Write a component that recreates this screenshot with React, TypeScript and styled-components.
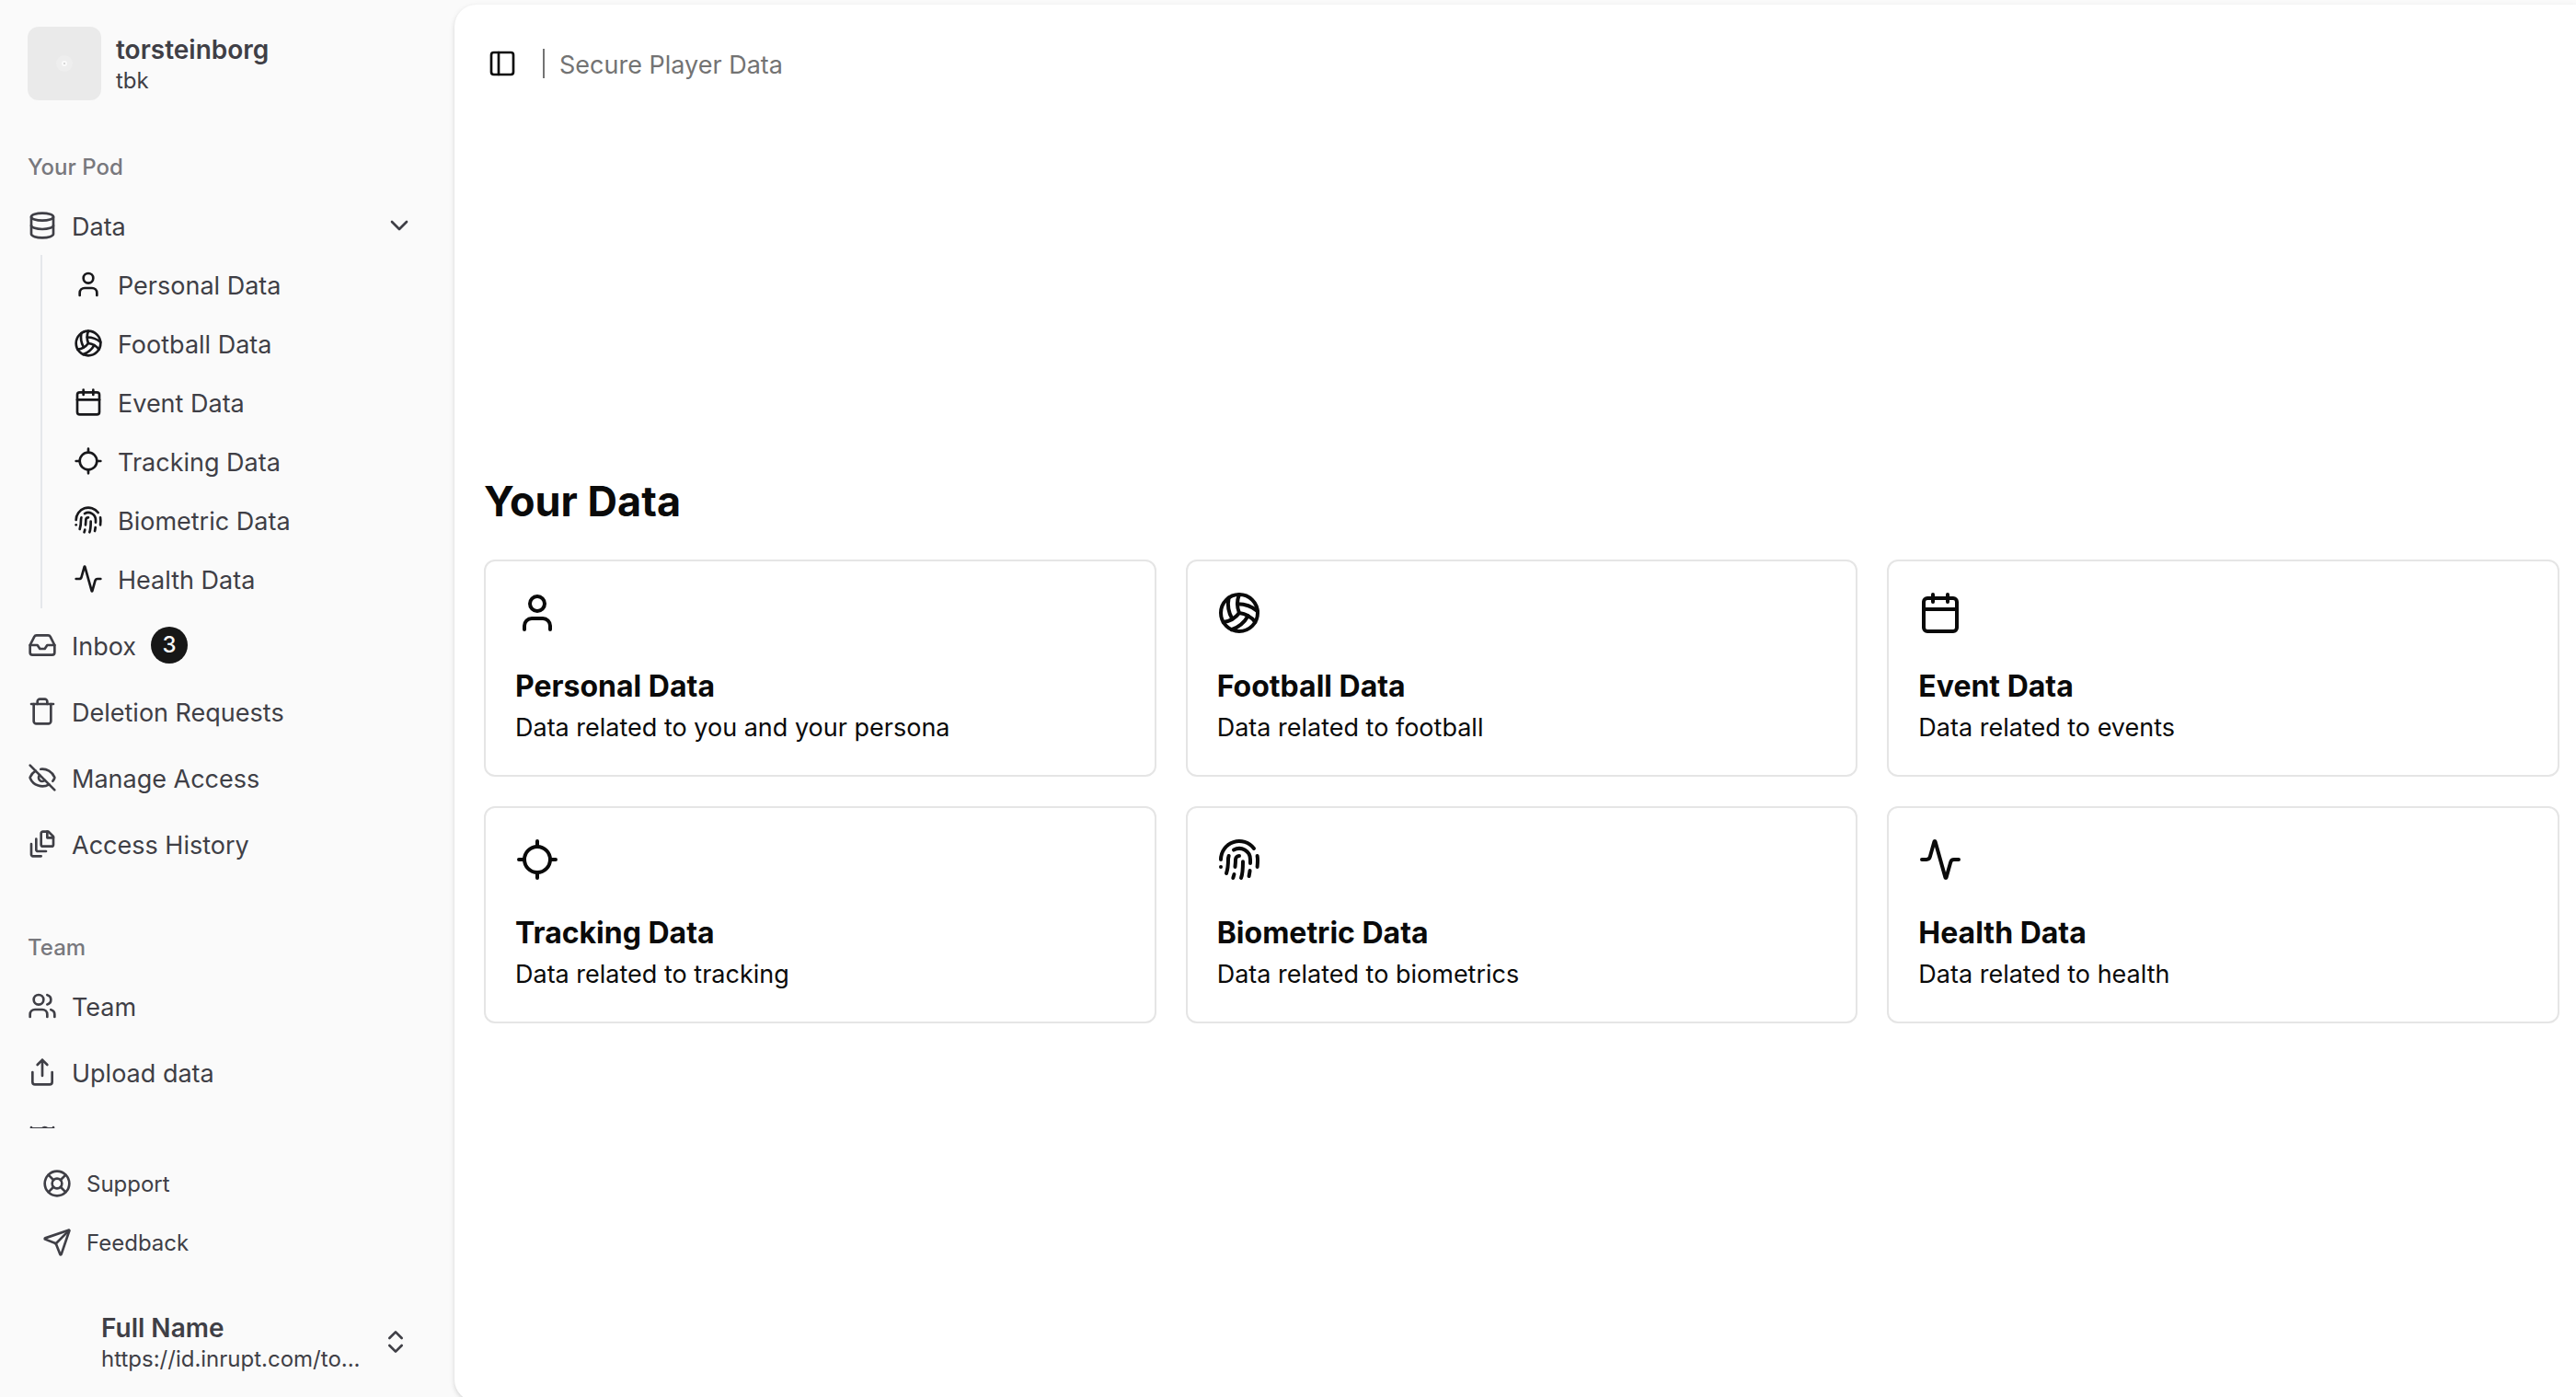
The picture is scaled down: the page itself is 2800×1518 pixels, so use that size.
import React from "react";
import styled, { createGlobalStyle } from "styled-components";
import {
  Activity,
  Calendar,
  ChevronDown,
  ChevronsUpDown,
  Crosshair,
  Database,
  EyeOff,
  Fingerprint,
  Inbox,
  LifeBuoy,
  LucideIcon,
  PanelLeft,
  Send,
  User,
  Users,
  Volleyball,
} from "lucide-react";

const colors = {
  sidebar: "#fafafa",
  sidebarText: "#3f3f46",
  sidebarLabel: "#78787d",
  rail: "#e5e7eb",
  ink: "#0a0a0a",
  subIcon: "#18181b",
  muted: "#737373",
  border: "#e5e5e5",
};

const GlobalStyle = createGlobalStyle`
  *, *::before, *::after { box-sizing: border-box; }
  body {
    margin: 0;
    background: ${colors.sidebar};
    color: ${colors.ink};
    font-family: Inter, "Liberation Sans", sans-serif;
    font-size: 27px;
    line-height: 40px;
    -webkit-font-smoothing: antialiased;
  }
  h1, h2, p, ul { margin: 0; padding: 0; }
  ul { list-style: none; }
  a { color: inherit; text-decoration: none; }
  button {
    border: 0;
    padding: 0;
    background: none;
    color: inherit;
    font: inherit;
    text-align: left;
    cursor: pointer;
  }
  svg { flex-shrink: 0; }
`;

const Shell = styled.div`
  display: flex;
  height: 100vh;
  overflow: hidden;
`;

const Sidebar = styled.aside`
  display: flex;
  flex-direction: column;
  flex: 0 0 494px;
  min-width: 0;
  padding: 13px 28px 12px 14px;
  color: ${colors.sidebarText};
`;

const AccountButton = styled.button<{ $compact?: boolean }>`
  display: flex;
  align-items: center;
  gap: 16px;
  width: 100%;
  height: ${(p) => (p.$compact ? 96 : 112)}px;
  padding: ${(p) => (p.$compact ? "0 20px 0 16px" : "0 16px")};
`;

const Avatar = styled.span`
  display: grid;
  place-items: center;
  width: 80px;
  height: 80px;
  border-radius: 12px;
  background: #eaeaea;
`;

const AvatarSlot = styled.span`
  flex: 0 0 64px;
  height: 64px;
`;

const AccountText = styled.span`
  display: flex;
  flex-direction: column;
  flex: 1;
  min-width: 0;
  padding-top: 2px;
`;

const AccountName = styled.span`
  font-size: 28px;
  font-weight: 600;
  line-height: 35px;
`;

const AccountDetail = styled.span`
  font-size: 24px;
  line-height: 32px;
  white-space: nowrap;
`;

const NavScroll = styled.div`
  display: flex;
  flex-direction: column;
  flex: 1;
  gap: 48px;
  min-height: 0;
  padding-top: 24px;
  overflow: hidden;
`;

const GroupLabel = styled.h2`
  display: flex;
  align-items: center;
  height: 64px;
  padding: 2px 16px 0;
  color: ${colors.sidebarLabel};
  font-size: 24px;
  font-weight: 500;
`;

const MenuList = styled.ul`
  display: flex;
  flex-direction: column;
  gap: 8px;
`;

const MenuLink = styled.a<{ $small?: boolean }>`
  display: flex;
  align-items: center;
  gap: 16px;
  height: ${(p) => (p.$small ? 56 : 64)}px;
  padding: 0 16px;
  font-size: ${(p) => (p.$small ? 24 : 27)}px;
`;

const MenuToggle = styled(MenuLink).attrs({ as: "button" })`
  width: 100%;
`;

const Label = styled.span<{ $grow?: boolean; $small?: boolean }>`
  flex: ${(p) => (p.$grow ? "1" : "none")};
  padding-top: ${(p) => (p.$small ? 2 : 4)}px;
`;

const SubList = styled(MenuList)`
  margin-left: 30px;
  padding: 4px 0 4px 18px;
  border-left: 2px solid ${colors.rail};
`;

const SubLink = styled.a`
  display: flex;
  align-items: center;
  gap: 16px;
  height: 56px;
  padding: 0 16px;

  svg { color: ${colors.subIcon}; }
`;

const Badge = styled.span`
  display: grid;
  place-items: center;
  width: 40px;
  height: 40px;
  border-radius: 50%;
  background: #171717;
  color: #fafafa;
  font-size: 24px;
  font-weight: 500;
`;

const SecondaryNav = styled.nav`
  padding: 32px 16px;
`;

const Panel = styled.main`
  display: flex;
  flex-direction: column;
  flex: 1;
  min-width: 0;
  margin: 5px 0 -5px;
  border-radius: 24px 0 0 24px;
  background: #ffffff;
  box-shadow: 0 2px 6px rgba(0, 0, 0, 0.1), 0 2px 4px rgba(0, 0, 0, 0.06);
`;

const TopBar = styled.header`
  display: flex;
  align-items: center;
  gap: 16px;
  height: 128px;
  padding: 0 24px;
  color: ${colors.muted};
`;

const PanelToggle = styled.button`
  display: grid;
  place-items: center;
  width: 56px;
  height: 56px;
  color: ${colors.ink};
`;

const Divider = styled.span`
  width: 2px;
  height: 32px;
  background: ${colors.muted};
`;

const Content = styled.section`
  display: flex;
  flex-direction: column;
  justify-content: center;
  flex: 1;
  gap: 30px;
  padding: 0 18px 32px 32px;
`;

const Title = styled.h1`
  font-size: 45px;
  font-weight: 700;
  line-height: 66px;
`;

const CardGrid = styled.div`
  display: grid;
  grid-template-columns: repeat(3, 1fr);
  gap: 32px;
`;

const Card = styled.a`
  display: flex;
  flex-direction: column;
  padding: 32px 32px 30px;
  border: 2px solid ${colors.border};
  border-radius: 12px;
`;

const CardTitle = styled.h2`
  margin-top: 32px;
  font-size: 32px;
  font-weight: 700;
  line-height: 48px;
`;

const CardText = styled.p`
  line-height: 42px;
`;

type DataKind = { label: string; text: string; icon: LucideIcon };

const dataKinds: DataKind[] = [
  { label: "Personal Data", text: "Data related to you and your persona", icon: User },
  { label: "Football Data", text: "Data related to football", icon: Volleyball },
  { label: "Event Data", text: "Data related to events", icon: Calendar },
  { label: "Tracking Data", text: "Data related to tracking", icon: Crosshair },
  { label: "Biometric Data", text: "Data related to biometrics", icon: Fingerprint },
  { label: "Health Data", text: "Data related to health", icon: Activity },
];

type IconProps = { size: number };

const Glyph = ({ size, children }: IconProps & { children: React.ReactNode }) => (
  <svg
    width={size}
    height={size}
    viewBox="0 0 24 24"
    fill="none"
    stroke="currentColor"
    strokeWidth="2"
    strokeLinecap="round"
    strokeLinejoin="round"
    aria-hidden="true"
  >
    {children}
  </svg>
);

const CrosshairOpen = ({ size }: IconProps) => (
  <Glyph size={size}>
    <path d="M2 12h3M19 12h3M12 2v3M12 19v3" />
    <circle cx="12" cy="12" r="7" />
  </Glyph>
);

const TrashIcon = ({ size }: IconProps) => (
  <Glyph size={size}>
    <path d="M3 6h18" />
    <path d="M19 6v14c0 1-1 2-2 2H7c-1 0-2-1-2-2V6" />
    <path d="M8 6V4c0-1 1-2 2-2h4c1 0 2 1 2 2v2" />
  </Glyph>
);

const UploadIcon = ({ size }: IconProps) => (
  <Glyph size={size}>
    <path d="M4 12v8a2 2 0 0 0 2 2h12a2 2 0 0 0 2-2v-8" />
    <path d="m16 6-4-4-4 4M12 2v13" />
  </Glyph>
);

const FileStackIcon = ({ size }: IconProps) => (
  <Glyph size={size}>
    <path d="M16 2v5h5" />
    <path d="M21 6v6.5c0 .8-.7 1.5-1.5 1.5h-7c-.8 0-1.5-.7-1.5-1.5v-9c0-.8.7-1.5 1.5-1.5H17l4 4z" />
    <path d="M7 8v8.8c0 .3.2.6.4.8.2.2.5.4.8.4H15" />
    <path d="M3 12v8.8c0 .3.2.6.4.8.2.2.5.4.8.4H11" />
  </Glyph>
);

const FrameIcon = ({ size }: IconProps) => (
  <Glyph size={size}>
    <path d="M3 3v18M21 3v18M3 4h18" />
    <circle cx="14" cy="6" r="3" />
  </Glyph>
);

const kindIcon = (kind: DataKind, size: number) => {
  if (kind.icon === Crosshair) return <CrosshairOpen size={size} />;
  const Icon = kind.icon;
  return <Icon size={size} />;
};

export default function App() {
  return (
    <>
      <GlobalStyle />
      <Shell>
        <Sidebar>
          <AccountButton type="button">
            <Avatar>
              <svg width="20" height="20" viewBox="0 0 20 20" aria-hidden="true">
                <circle cx="10" cy="10" r="9" fill="#eeeeee" />
                <circle cx="10" cy="10" r="3" fill="#fafafa" />
                <circle cx="10" cy="10" r="1" fill="#cccccc" />
              </svg>
            </Avatar>
            <AccountText>
              <AccountName>torsteinborg</AccountName>
              <AccountDetail>tbk</AccountDetail>
            </AccountText>
          </AccountButton>

          <NavScroll>
            <nav>
              <GroupLabel>Your Pod</GroupLabel>
              <MenuList>
                <li>
                  <MenuToggle type="button" aria-expanded="true">
                    <Database size={32} />
                    <Label $grow>Data</Label>
                    <ChevronDown size={32} />
                  </MenuToggle>
                  <SubList>
                    {dataKinds.map((kind) => (
                      <li key={kind.label}>
                        <SubLink href="#">
                          {kindIcon(kind, 32)}
                          <Label>{kind.label}</Label>
                        </SubLink>
                      </li>
                    ))}
                  </SubList>
                </li>
                <li>
                  <MenuLink href="#">
                    <Inbox size={32} />
                    <Label>Inbox</Label>
                    <Badge>3</Badge>
                  </MenuLink>
                </li>
                <li>
                  <MenuLink href="#">
                    <TrashIcon size={32} />
                    <Label>Deletion Requests</Label>
                  </MenuLink>
                </li>
                <li>
                  <MenuLink href="#">
                    <EyeOff size={32} />
                    <Label>Manage Access</Label>
                  </MenuLink>
                </li>
                <li>
                  <MenuLink href="#">
                    <FileStackIcon size={32} />
                    <Label>Access History</Label>
                  </MenuLink>
                </li>
              </MenuList>
            </nav>
            <nav>
              <GroupLabel>Team</GroupLabel>
              <MenuList>
                <li>
                  <MenuLink href="#">
                    <Users size={32} />
                    <Label>Team</Label>
                  </MenuLink>
                </li>
                <li>
                  <MenuLink href="#">
                    <UploadIcon size={32} />
                    <Label>Upload data</Label>
                  </MenuLink>
                </li>
                <li>
                  <MenuLink href="#" aria-label="More">
                    <FrameIcon size={32} />
                  </MenuLink>
                </li>
              </MenuList>
            </nav>
          </NavScroll>

          <SecondaryNav>
            <MenuList>
              <li>
                <MenuLink href="#" $small>
                  <LifeBuoy size={32} />
                  <Label $small>Support</Label>
                </MenuLink>
              </li>
              <li>
                <MenuLink href="#" $small>
                  <Send size={32} />
                  <Label $small>Feedback</Label>
                </MenuLink>
              </li>
            </MenuList>
          </SecondaryNav>

          <AccountButton type="button" $compact>
            <AvatarSlot />
            <AccountText>
              <AccountName>Full Name</AccountName>
              <AccountDetail>https://id.inrupt.com/to...</AccountDetail>
            </AccountText>
            <ChevronsUpDown size={32} />
          </AccountButton>
        </Sidebar>

        <Panel>
          <TopBar>
            <PanelToggle type="button" aria-label="Toggle sidebar">
              <PanelLeft size={32} />
            </PanelToggle>
            <Divider />
            <Label>Secure Player Data</Label>
          </TopBar>
          <Content>
            <Title>Your Data</Title>
            <CardGrid>
              {dataKinds.map((kind) => (
                <Card href="#" key={kind.label}>
                  {kindIcon(kind, 48)}
                  <CardTitle>{kind.label}</CardTitle>
                  <CardText>{kind.text}</CardText>
                </Card>
              ))}
            </CardGrid>
          </Content>
        </Panel>
      </Shell>
    </>
  );
}
